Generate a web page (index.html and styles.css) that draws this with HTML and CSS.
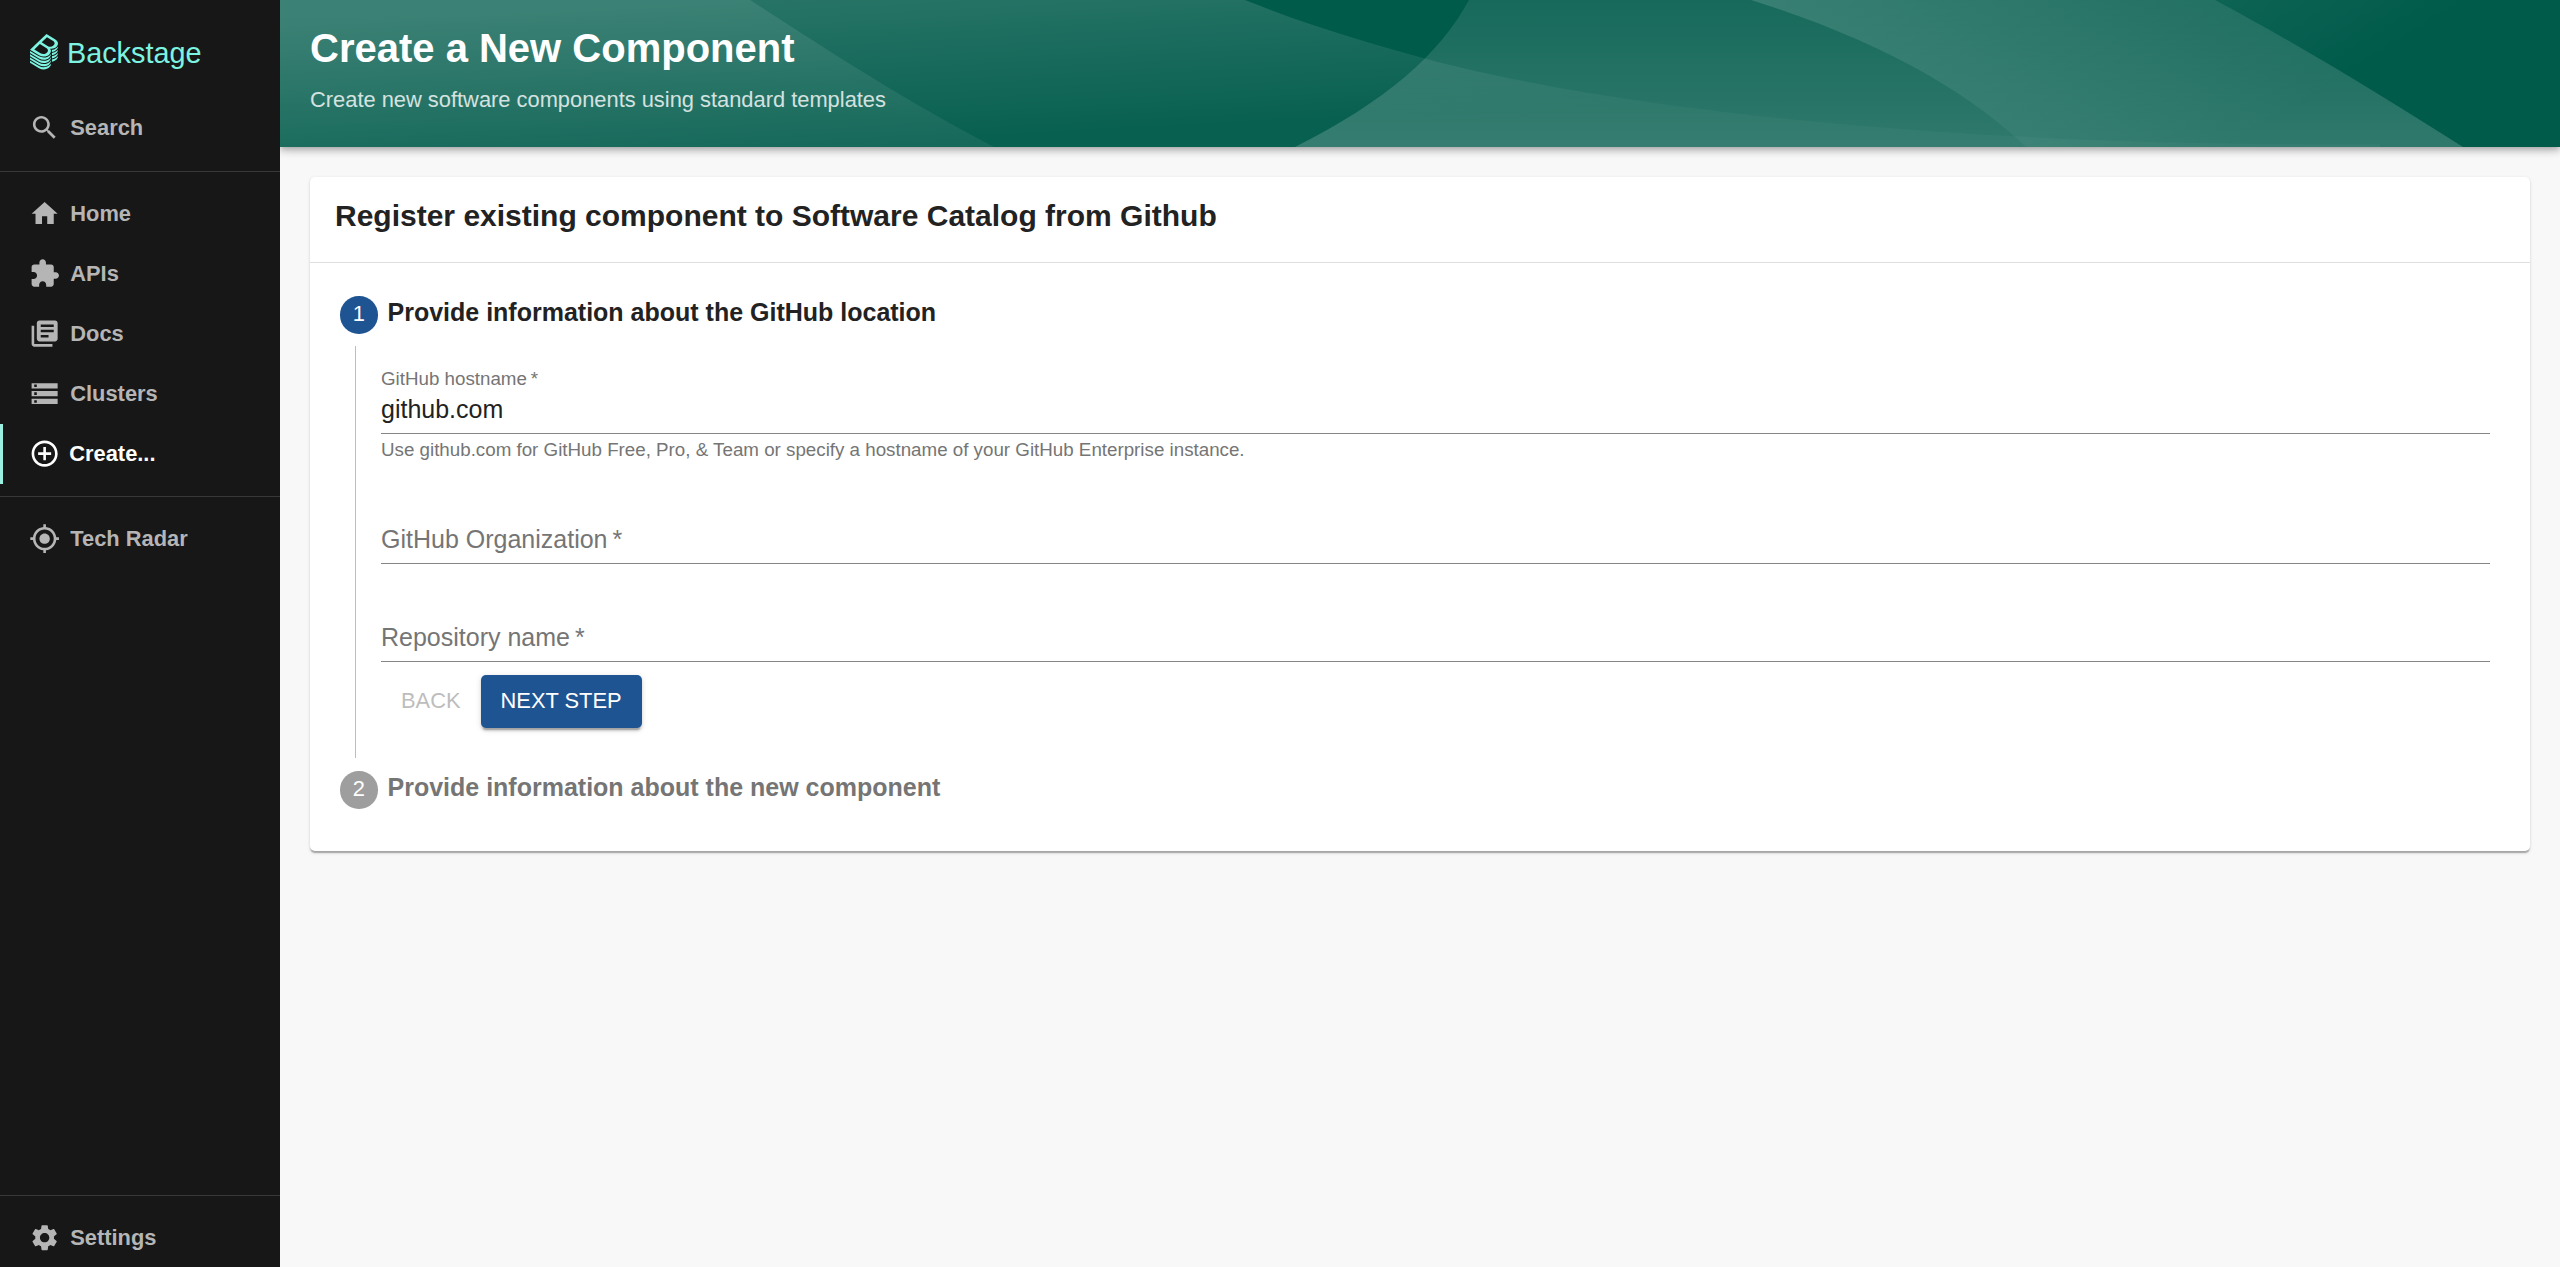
FILE: index.html
```html
<!DOCTYPE html>
<html lang="en">
<head>
<meta charset="utf-8">
<title>Create a New Component</title>
<link rel="stylesheet" href="styles.css">
</head>
<body>
<div class="app">
  <nav class="sidebar">
    <a class="logo">
      <svg class="logo-mark" viewBox="0 0 337.46 428.5"><path d="M303,166.05a80.69,80.69,0,0,0,13.45-10.37c.79-.77,1.55-1.53,2.3-2.3a83.12,83.12,0,0,0,7.93-9.38A63.69,63.69,0,0,0,333,133.23a48.58,48.58,0,0,0,4.35-16.4c1.49-19.39-10-38.67-35.62-54.22L198.56,0,78.3,115.23,0,190.25l108.6,65.91a111.59,111.59,0,0,0,57.76,16.41c24.92,0,48.8-8.8,66.42-25.69,19.16-18.36,25.52-42.12,13.7-61.87a49.22,49.22,0,0,0-6.8-8.87A89.17,89.17,0,0,0,259,178.29h.15a85.08,85.08,0,0,0,31-5.79A80.88,80.88,0,0,0,303,166.05ZM202.45,225.86c-19.32,18.51-50.4,21.23-75.7,5.9L51.61,186.15l67.45-64.64,76.41,46.38C223,184.58,221.49,207.61,202.45,225.86Zm8.93-82.22-70.65-42.89L205.14,39,274.51,81.1c25.94,15.72,29.31,37,10.55,55A60.69,60.69,0,0,1,211.38,143.64Zm29.86,190c-19.57,18.75-46.17,29.09-74.88,29.09a123.73,123.73,0,0,1-64.1-18.2L0,282.52v24.67L108.6,373.1a111.6,111.6,0,0,0,57.76,16.42c24.92,0,48.8-8.81,66.42-25.69,12.88-12.34,20-27.13,19.68-41.49v-1.79A87.27,87.27,0,0,1,241.24,333.68Zm0-39c-19.57,18.75-46.17,29.08-74.88,29.08a123.81,123.81,0,0,1-64.1-18.19L0,243.53v24.68l108.6,65.91a111.6,111.6,0,0,0,57.76,16.42c24.92,0,48.8-8.81,66.42-25.69,12.88-12.34,20-27.13,19.68-41.5v-1.78A87.27,87.27,0,0,1,241.24,294.7Zm0-39c-19.57,18.76-46.17,29.09-74.88,29.09a123.81,123.81,0,0,1-64.1-18.19L0,204.55v24.68l108.6,65.91a111.59,111.59,0,0,0,57.76,16.41c24.92,0,48.8-8.8,66.42-25.68,12.88-12.35,20-27.13,19.68-41.5v-1.82A86.09,86.09,0,0,1,241.24,255.71Zm83.7,25.74a94.15,94.15,0,0,1-60.2,25.86h0V334a81.6,81.6,0,0,0,51.74-22.37c14-13.38,21.14-28.11,21-42.64v-2.19A94.92,94.92,0,0,1,324.94,281.45Zm-83.7,91.21c-19.57,18.76-46.17,29.09-74.88,29.09a123.73,123.73,0,0,1-64.1-18.2L0,321.5v24.68l108.6,65.9a111.6,111.6,0,0,0,57.76,16.42c24.92,0,48.8-8.8,66.42-25.69,12.88-12.34,20-27.13,19.68-41.49v-1.79A86.29,86.29,0,0,1,241.24,372.66ZM327,162.45c-.68.69-1.35,1.38-2.05,2.06a94.37,94.37,0,0,1-10.64,8.65,91.35,91.35,0,0,1-11.6,7,94.53,94.53,0,0,1-26.24,8.71,97.69,97.69,0,0,1-14.16,1.57c.5,1.61.9,3.25,1.25,4.9a53.27,53.27,0,0,1,1.14,12V217h.05a84.41,84.41,0,0,0,25.35-5.55,81,81,0,0,0,26.39-16.82c8.8-8.5,15.56-17.86,18.9-28.48a54.2,54.2,0,0,0,2-14.32V149.79A90.78,90.78,0,0,1,327,162.45Zm-2.05,80.01a94.15,94.15,0,0,1-60.2,25.86h0V295a81.6,81.6,0,0,0,51.74-22.37c14-13.38,21.14-28.11,21-42.64v-2.19A94.92,94.92,0,0,1,324.94,242.46Zm0-39a94.15,94.15,0,0,1-60.2,25.86h0v26.65a81.6,81.6,0,0,0,51.74-22.37c14-13.38,21.14-28.11,21-42.64v-2.19A95,95,0,0,1,324.94,203.47Z"/></svg>
      <span class="logo-text">Backstage</span>
    </a>
    <a class="nav-item nav-search">
      <svg class="icon" viewBox="0 0 24 24"><path d="M15.5 14h-.79l-.28-.27C15.41 12.59 16 11.11 16 9.5 16 5.91 13.09 3 9.5 3S3 5.91 3 9.5 5.91 16 9.5 16c1.61 0 3.09-.59 4.23-1.57l.27.28v.79l5 4.99L20.49 19l-4.99-5zm-6 0C7.01 14 5 11.99 5 9.5S7.01 5 9.5 5 14 7.01 14 9.5 11.99 14 9.5 14z"/></svg>
      <span>Search</span>
    </a>
    <hr class="rule">
    <a class="nav-item">
      <svg class="icon" viewBox="0 0 24 24"><path d="M10 20v-6h4v6h5v-8h3L12 3 2 12h3v8z"/></svg>
      <span>Home</span>
    </a>
    <a class="nav-item">
      <svg class="icon" viewBox="0 0 24 24"><path d="M20.5 11H19V7c0-1.1-.9-2-2-2h-4V3.500C13 2.120 11.880 1 10.500 1S8 2.120 8 3.500V5H4c-1.100 0-1.990.9-1.990 2v3.800H3.500c1.490 0 2.700 1.210 2.700 2.700s-1.210 2.700-2.700 2.700H2V20c0 1.100.9 2 2 2h3.800v-1.500c0-1.490 1.210-2.700 2.700-2.700 1.490 0 2.700 1.210 2.700 2.700V22H17c1.100 0 2-.9 2-2v-4h1.500c1.380 0 2.500-1.120 2.500-2.500S21.880 11 20.500 11z"/></svg>
      <span>APIs</span>
    </a>
    <a class="nav-item">
      <svg class="icon" viewBox="0 0 24 24"><path d="M4 6H2v14c0 1.100.9 2 2 2h14v-2H4V6zm16-4H8c-1.100 0-2 .9-2 2v12c0 1.100.9 2 2 2h12c1.100 0 2-.9 2-2V4c0-1.100-.9-2-2-2zm-1 9H9V9h10v2zm-4 4H9v-2h6v2zm4-8H9V5h10v2z"/></svg>
      <span>Docs</span>
    </a>
    <a class="nav-item">
      <svg class="icon" viewBox="0 0 24 24"><path d="M2 20h20v-4H2v4zm2-3h2v2H4v-2zM2 4v4h20V4H2zm4 3H4V5h2v2zm-4 7h20v-4H2v4zm2-3h2v2H4v-2z"/></svg>
      <span>Clusters</span>
    </a>
    <a class="nav-item nav-item-active">
      <svg class="icon" viewBox="0 0 24 24"><path d="M13 7h-2v4H7v2h4v4h2v-4h4v-2h-4V7zm-1-5C6.480 2 2 6.480 2 12s4.480 10 10 10 10-4.480 10-10S17.520 2 12 2zm0 18c-4.410 0-8-3.590-8-8s3.590-8 8-8 8 3.590 8 8-3.590 8-8 8z"/></svg>
      <span>Create...</span>
    </a>
    <hr class="rule">
    <a class="nav-item">
      <svg class="icon" viewBox="0 0 24 24"><path d="M12 8c-2.210 0-4 1.790-4 4s1.790 4 4 4 4-1.790 4-4-1.790-4-4-4zm8.940 3c-.46-4.170-3.770-7.480-7.940-7.940V1h-2v2.060C6.830 3.520 3.520 6.830 3.060 11H1v2h2.060c.46 4.170 3.770 7.480 7.940 7.940V23h2v-2.060c4.170-.46 7.480-3.770 7.940-7.940H23v-2h-2.060zM12 19c-3.870 0-7-3.130-7-7s3.130-7 7-7 7 3.130 7 7-3.130 7-7 7z"/></svg>
      <span>Tech Radar</span>
    </a>
    <div class="spacer"></div>
    <hr class="rule">
    <a class="nav-item">
      <svg class="icon" viewBox="0 0 24 24"><path d="M19.140 12.940c.04-.3.06-.61.06-.94 0-.32-.02-.64-.07-.94l2.030-1.580c.18-.14.23-.41.12-.61l-1.920-3.320c-.12-.22-.37-.29-.59-.22l-2.390.96c-.5-.38-1.030-.7-1.620-.94l-.36-2.540c-.04-.24-.24-.41-.48-.41h-3.840c-.24 0-.43.17-.47.41l-.36 2.540c-.59.24-1.130.57-1.620.94l-2.390-.96c-.22-.08-.47 0-.59.22L2.740 8.870c-.12.21-.08.47.12.61l2.030 1.580c-.05.3-.09.63-.09.94s.02.64.07.94l-2.030 1.580c-.18.14-.23.41-.12.61l1.920 3.320c.12.22.37.29.59.22l2.390-.96c.5.38 1.030.7 1.620.94l.36 2.540c.05.24.24.41.48.41h3.840c.24 0 .44-.17.47-.41l.36-2.540c.59-.24 1.130-.56 1.620-.94l2.390.96c.22.08.47 0 .59-.22l1.920-3.320c.12-.22.07-.47-.12-.61l-2.010-1.580zM12 15.600c-1.980 0-3.600-1.620-3.600-3.600s1.620-3.600 3.600-3.600 3.600 1.620 3.600 3.600-1.620 3.600-3.600 3.600z"/></svg>
      <span>Settings</span>
    </a>
  </nav>

  <main class="page">
    <header class="header">
      <svg class="waves" viewBox="0 0 2280 147" preserveAspectRatio="none">
        <defs>
          <linearGradient id="left" gradientUnits="userSpaceOnUse" x1="0" y1="0" x2="0" y2="147"><stop offset="0" stop-color="#fff" stop-opacity=".095"/><stop offset="1" stop-color="#fff" stop-opacity=".06"/></linearGradient>
          <linearGradient id="sweep" gradientUnits="userSpaceOnUse" x1="500" y1="-3" x2="508" y2="150"><stop offset="0" stop-color="#fff" stop-opacity=".155"/><stop offset="1" stop-color="#fff" stop-opacity=".03"/></linearGradient>
          <linearGradient id="dome" gradientUnits="userSpaceOnUse" x1="0" y1="0" x2="0" y2="147"><stop offset="0" stop-color="#fff" stop-opacity=".09"/><stop offset="1" stop-color="#fff" stop-opacity=".185"/></linearGradient>
          <linearGradient id="fade" gradientUnits="userSpaceOnUse" x1="1500" y1="0" x2="1688" y2="310"><stop offset="0" stop-color="#fff" stop-opacity=".14"/><stop offset="1" stop-color="#fff" stop-opacity="0"/></linearGradient>
        </defs>
        <path fill="url(#sweep)" d="M0 0H965C1030 26 1085 42 1143 58C1260 90 1560 147 2100 144.500V147H0Z"/>
        <path fill="url(#left)" d="M0 0H470C540 45 620 98 714 147H0Z"/>
        <path fill="url(#dome)" d="M1189 0H1935C2025 48 2105 98 2183 147H1015C1105 102 1160 54 1189 0Z"/>
        <path fill="url(#fade)" d="M1471 0H2280V147H1746C1692 95 1605 42 1471 0Z"/>
      </svg>
      <div class="header-text">
        <h1>Create a New Component</h1>
        <p>Create new software components using standard templates</p>
      </div>
    </header>

    <section class="card">
      <h2 class="card-title">Register existing component to Software Catalog from Github</h2>
      <div class="stepper">
        <div class="step">
          <span class="badge">1</span>
          <h3>Provide information about the GitHub location</h3>
        </div>
        <form class="step-body">
          <div class="field field-filled">
            <label>GitHub hostname&thinsp;*</label>
            <div class="value">github.com</div>
          </div>
          <p class="helper">Use github.com for GitHub Free, Pro, &amp; Team or specify a hostname of your GitHub Enterprise instance.</p>
          <div class="field field-org"><label>GitHub Organization&thinsp;*</label></div>
          <div class="field field-repo"><label>Repository name&thinsp;*</label></div>
          <div class="actions">
            <button type="button" class="button" disabled>BACK</button>
            <button type="button" class="button button-primary">NEXT STEP</button>
          </div>
        </form>
        <div class="step step-pending">
          <span class="badge">2</span>
          <h3>Provide information about the new component</h3>
        </div>
      </div>
    </section>
  </main>
</div>
</body>
</html>
```
FILE: styles.css
```css
* { box-sizing: border-box; }
body, h1, h2, h3, p { margin: 0; }
body {
  font-family: "Liberation Sans", Arial, sans-serif;
  background: #f8f8f8;
  color: #222;
}
.app { display: flex; height: 1267px; overflow: hidden; }

/* Sidebar */
.sidebar {
  position: relative;
  z-index: 1;
  flex: 0 0 280px;
  display: flex;
  flex-direction: column;
  height: 1268px;
  background: #171717;
  color: #b5b5b5;
}
.logo {
  display: flex;
  flex: 0 0 99px;
  padding: 34px 0 0 30px;
  gap: 9px;
  color: #7df3e1;
}
.logo-mark { width: 28px; height: 35.500px; fill: currentColor; }
.logo-text { font-size: 28.800px; line-height: 39px; }
.nav-item {
  display: flex;
  flex: 0 0 60px;
  align-items: center;
  gap: 10px;
  padding-left: 29px;
  font-size: 21.875px;
  font-weight: 700;
}
.nav-search { padding-bottom: 2px; }
.nav-item-active {
  border-left: 3px solid #9bf0e1;
  padding-left: 26px;
  gap: 9px;
  color: #fff;
}
.icon { width: 31.250px; height: 31.250px; fill: currentColor; }
.rule { width: 100%; height: 1px; margin: 12px 0; border: 0; background: #383838; flex: none; }
.spacer { flex: 1; }

/* Page header */
.page { flex: 1; min-width: 0; }
.header {
  display: grid;
  height: 147px;
  background: #005b4b;
  box-shadow: 0 2.500px 5px -1.250px rgba(0,0,0,.2), 0 5px 6.250px rgba(0,0,0,.14), 0 1.250px 12.500px rgba(0,0,0,.12);
  color: #fff;
}
.waves, .header-text { grid-area: 1 / 1; }
.waves { width: 100%; height: 147px; }
.header-text { z-index: 1; padding: 23px 30px 0; }
.header h1 { font-size: 40px; line-height: 50px; }
.header p { margin-top: 12px; font-size: 21.875px; line-height: 30px; opacity: .8; }

/* Card */
.card {
  height: 674px;
  margin: 30px;
  border-radius: 5px;
  background: #fff;
  box-shadow: 0 2.500px 1.250px -1.250px rgba(0,0,0,.16), 0 1.250px 1.250px rgba(0,0,0,.12), 0 1.250px 3.750px rgba(0,0,0,.12);
}
.card-title {
  height: 86px;
  padding: 19px 25px 0;
  border-bottom: 1px solid #dedede;
  font-size: 30px;
  line-height: 40px;
}
.stepper { padding: 33px 40px 0 30px; }
.step { display: flex; align-items: flex-start; gap: 10px; height: 50px; }
.step h3 { font-size: 25px; line-height: 33px; }
.badge {
  width: 37.500px;
  height: 37.500px;
  border-radius: 50%;
  background: #1f5493;
  color: #fff;
  font-size: 21.875px;
  line-height: 35px;
  text-align: center;
}
.step-body {
  height: 412px;
  margin-left: 15px;
  padding: 21px 0 0 25px;
  border-left: 1px solid #bdbdbd;
}
.field { border-bottom: 1px solid #868686; color: #757575; font-size: 25px; line-height: 30px; }
.field label { display: block; }
.field-filled { height: 67px; }
.field-filled label { font-size: 18.750px; line-height: 23px; }
.field-filled .value { margin-top: 4px; color: #222; }
.helper { margin-top: 4px; color: #757575; font-size: 18.750px; line-height: 24px; }
.field-org { height: 40px; margin-top: 62px; }
.field-repo { height: 40px; margin-top: 58px; }
.actions { display: flex; margin-top: 13px; }
.button {
  height: 53px;
  padding: 0 20px 2px;
  border: 0;
  border-radius: 5px;
  background: none;
  color: #bdbdbd;
  font: 21.875px "Liberation Sans", Arial, sans-serif;
}
.button-primary {
  background: #1f5493;
  color: #fff;
  box-shadow: 0 3.750px 1.250px -2.500px rgba(0,0,0,.2), 0 2.500px 2.500px rgba(0,0,0,.14), 0 1.250px 6.250px rgba(0,0,0,.12);
}
.step-pending { margin-top: 13px; color: #757575; }
.step-pending .badge { background: #9e9e9e; }
```
